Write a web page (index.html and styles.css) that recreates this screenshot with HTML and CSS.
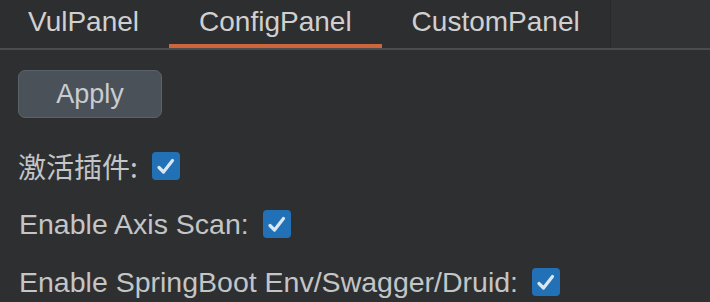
FILE: index.html
```html
<!DOCTYPE html>
<html lang="zh">
<head>
<meta charset="utf-8">
<title>Config</title>
<link rel="stylesheet" href="styles.css">
</head>
<body>
<div class="tabbar">
  <div class="tabs">
    <div class="tab">VulPanel</div>
    <div class="tab active">ConfigPanel</div>
    <div class="tab">CustomPanel</div>
  </div>
  <div class="tab-fill"></div>
</div>
<div class="content">
  <button class="apply">Apply</button>
  <div class="row">
    <span class="label cjk">激活插件:</span>
    <span class="check"><svg viewBox="0 0 28 28" width="28" height="28"><path d="M7 15.5 L11.5 20 L20.5 8.5" fill="none" stroke="#d9e7f3" stroke-width="3.2" stroke-linecap="round" stroke-linejoin="round"/></svg></span>
  </div>
  <div class="row">
    <span class="label">Enable Axis Scan:</span>
    <span class="check"><svg viewBox="0 0 28 28" width="28" height="28"><path d="M7 15.5 L11.5 20 L20.5 8.5" fill="none" stroke="#d9e7f3" stroke-width="3.2" stroke-linecap="round" stroke-linejoin="round"/></svg></span>
  </div>
  <div class="row">
    <span class="label">Enable SpringBoot Env/Swagger/Druid:</span>
    <span class="check"><svg viewBox="0 0 28 28" width="28" height="28"><path d="M7 15.5 L11.5 20 L20.5 8.5" fill="none" stroke="#d9e7f3" stroke-width="3.2" stroke-linecap="round" stroke-linejoin="round"/></svg></span>
  </div>
</div>
</body>
</html>
```
FILE: styles.css
```css
html, body {
  margin: 0;
  padding: 0;
  background: #2e2f31;
  font-family: "Liberation Sans", Arial, "Noto Sans CJK SC", sans-serif;
  color: #c4c5c7;
  overflow: hidden;
}
.tabbar {
  display: flex;
  border-bottom: 2px solid #4b4c4e;
  background: #2d2e30;
}
.tabs {
  display: flex;
  border-right: 1px solid #28292b;
}
.tab {
  padding: 6px 30px;
  line-height: 32px;
  font-size: 28px;
  color: #d0d0d0;
  border-bottom: 4px solid transparent;
}
.tab:first-child {
  padding-left: 28px;
}
.tab.active {
  border-bottom-color: #cd663c;
}
.tab-fill {
  flex: 1;
  background: #313234;
}
.content {
  padding: 20px 0 0 18px;
}
.apply {
  display: block;
  width: 144px;
  height: 48px;
  margin: 0 0 19px 0;
  padding: 0;
  background: #4b5159;
  border: 1px solid #5b626b;
  border-radius: 7px;
  color: #c9ccd0;
  font-family: "Liberation Sans", Arial, sans-serif;
  font-size: 27px;
}
.row {
  display: flex;
  align-items: center;
  gap: 14px;
  height: 58px;
  font-size: 28.5px;
}
.label {
  padding-left: 1px;
}
.cjk {
  font-family: "Noto Sans CJK SC", sans-serif;
  font-size: 28px;
  padding-left: 0;
}
.check {
  display: flex;
  width: 28px;
  height: 28px;
  border-radius: 4px;
  background: #2270b6;
}
```
